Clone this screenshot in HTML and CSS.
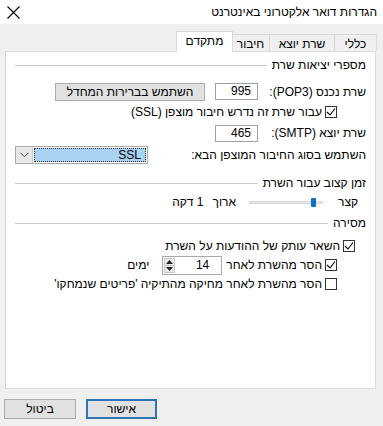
FILE: index.html
```html
<!DOCTYPE html>
<html lang="he" dir="rtl">
<head>
<meta charset="utf-8">
<title>הגדרות דואר אלקטרוני באינטרנט</title>
<link rel="stylesheet" href="styles.css">
</head>
<body>
<div class="window">
  <div class="titlebar">
    <span class="title">הגדרות דואר אלקטרוני באינטרנט</span>
    <svg class="close" width="13" height="13" viewBox="0 0 13 13"><path d="M0.5 0.5 L12.5 12.5 M12.5 0.5 L0.5 12.5" stroke="#000" stroke-width="1.1" fill="none"/></svg>
  </div>
  <div class="tabs">
    <div class="tab t1">כללי</div>
    <div class="tab t2">שרת יוצא</div>
    <div class="tab t3">חיבור</div>
    <div class="tab active">מתקדם</div>
  </div>
  <div class="panel">
    <div class="group-head g1"><span>מספרי יציאות שרת</span><i class="rule"></i></div>
    <div class="row r1">
      <span class="lbl fixed">שרת נכנס (POP3):</span>
      <span class="field">995</span>
      <span class="btn wide">השתמש בברירות המחדל</span>
    </div>
    <div class="row r2 indent">
      <span class="cb checked"><svg width="10" height="10" viewBox="0 0 10 10"><path d="M1 5 L4 8 L9 1.5" stroke="#000" stroke-width="1.1" fill="none"/></svg></span>
      <span class="lbl">עבור שרת זה נדרש חיבור מוצפן (SSL)</span>
    </div>
    <div class="row r3">
      <span class="lbl fixed">שרת יוצא (SMTP):</span>
      <span class="field">465</span>
    </div>
    <div class="row r4">
      <span class="lbl">השתמש בסוג החיבור המוצפן הבא:</span>
      <span class="select">
        <span class="sel-value"><span class="focus">SSL</span></span>
        <span class="sel-arrow"><svg width="9" height="6" viewBox="0 0 9 6"><path d="M0.5 0.8 L4.5 4.8 L8.5 0.8" stroke="#444" stroke-width="1" fill="none"/></svg></span>
      </span>
    </div>
    <div class="group-head g2"><span>זמן קצוב עבור השרת</span><i class="rule"></i></div>
    <div class="row r5">
      <span class="lbl">קצר</span>
      <span class="track"><i class="thumb"></i></span>
      <span class="lbl">ארוך</span>
      <span class="lbl val">1 דקה</span>
    </div>
    <div class="group-head g3"><span>מסירה</span><i class="rule"></i></div>
    <div class="row r6 indent-s">
      <span class="cb checked"><svg width="10" height="10" viewBox="0 0 10 10"><path d="M1 5 L4 8 L9 1.5" stroke="#000" stroke-width="1.1" fill="none"/></svg></span>
      <span class="lbl">השאר עותק של ההודעות על השרת</span>
    </div>
    <div class="row r7 indent">
      <span class="cb checked"><svg width="10" height="10" viewBox="0 0 10 10"><path d="M1 5 L4 8 L9 1.5" stroke="#000" stroke-width="1.1" fill="none"/></svg></span>
      <span class="lbl">הסר מהשרת לאחר</span>
      <span class="spin">
        <span class="spin-val">14</span>
        <span class="spin-btns">
          <span class="sb"><svg width="7" height="4" viewBox="0 0 7 4"><path d="M0 4 L3.5 0 L7 4 Z" fill="#222"/></svg></span>
          <span class="sb"><svg width="7" height="4" viewBox="0 0 7 4"><path d="M0 0 L3.5 4 L7 0 Z" fill="#222"/></svg></span>
        </span>
      </span>
      <span class="lbl days">ימים</span>
    </div>
    <div class="row r8 indent">
      <span class="cb"></span>
      <span class="lbl">הסר מהשרת לאחר מחיקה מהתיקיה 'פריטים שנמחקו'</span>
    </div>
  </div>
  <div class="footer">
    <span class="btn dlg default">אישור</span>
    <span class="btn dlg">ביטול</span>
  </div>
</div>
</body>
</html>
```
FILE: styles.css
```css
* { box-sizing: border-box; }
html, body { margin: 0; padding: 0; }
body {
  width: 383px;
  height: 426px;
  overflow: hidden;
  background: #f0f0f0;
  font-family: "Liberation Sans", "DejaVu Sans", sans-serif;
  font-size: 12px;
  color: #000;
}
.window { display: flex; flex-direction: column; height: 426px; }

.titlebar {
  height: 24px;
  background: #fff;
  display: flex;
  align-items: center;
  justify-content: space-between;
  padding: 0 6px 0 7px;
}
.title { font-size: 12px; }
.close { display: block; }

.tabs {
  height: 27px;
  display: flex;
  align-items: flex-end;
  padding-right: 6px;
}
.tab {
  height: 17px;
  border: 1px solid #d9d9d9;
  border-bottom: none;
  background: #f0f0f0;
  display: flex;
  align-items: center;
  justify-content: center;
  margin-left: -1px;
  padding-top: 1px;
}
.t1 { width: 43px; }
.t2 { width: 66px; }
.t3 { width: 39px; }
.tab.active {
  width: 57px;
  height: 21px;
  background: #fff;
  margin-left: 0;
  margin-right: -1px;
  margin-bottom: -1px;
  padding-bottom: 3px;
  z-index: 1;
}

.panel {
  margin: 0 7px 0 5px;
  height: 338px;
  background: #fff;
  border: 1px solid #d9d9d9;
  padding: 0 9px 0 9px;
  display: flex;
  flex-direction: column;
}

.group-head {
  height: 14px;
  display: flex;
  align-items: center;
  gap: 5px;
}
.rule { flex: 1; height: 1px; background: #c8c8c8; }
.g1 { margin-top: 6px; }
.g2 { margin-top: 12px; }
.g3 { margin-top: 6px; }

.row { display: flex; align-items: center; }
.r1 { height: 19px; margin-top: 10px; }
.r2 { height: 16px; margin-top: 3px; }
.r3 { height: 18px; margin-top: 4px; }
.r4 { height: 18px; margin-top: 4px; justify-content: space-between; }
.r5 { height: 16px; margin-top: 4px; padding-right: 8px; }
.r6 { height: 16px; margin-top: 8px; }
.r7 { height: 20px; margin-top: 1px; }
.r8 { height: 16px; margin-top: 1px; }
.indent { padding-right: 29px; }
.indent-s { padding-right: 11px; }

.lbl { white-space: nowrap; }
.fixed { width: 108px; }

.field {
  width: 43px;
  height: 17px;
  border: 1px solid #a0a0a0;
  background: #fff;
  text-align: right;
  padding-right: 6px;
  line-height: 15px;
}
.btn {
  display: flex;
  align-items: center;
  justify-content: center;
  background: #e1e1e1;
  border: 1px solid #adadad;
  white-space: nowrap;
}
.wide { width: 150px; height: 18px; margin-right: 10px; }

.cb {
  width: 12px;
  height: 12px;
  border: 1px solid #333;
  background: #fff;
  display: flex;
  align-items: center;
  justify-content: center;
  margin-left: 3px;
  flex: none;
}

.select {
  width: 133px;
  height: 18px;
  border: 1px solid #a9a9a9;
  display: flex;
  background: #fff;
}
.sel-value {
  flex: 1;
  padding: 1px;
  display: flex;
}
.focus {
  flex: 1;
  background: #a8d2f2;
  border: 1px dotted #333;
  text-align: right;
  padding-right: 4px;
  line-height: 12px;
}
.sel-arrow {
  width: 17px;
  background: #e8e8e8;
  border-right: 1px solid #c9c9c9;
  display: flex;
  align-items: center;
  justify-content: center;
}

.track {
  width: 74px;
  height: 3px;
  background: #e6e6e6;
  border: 1px solid #d8d8d8;
  margin-right: 15px;
  margin-left: 13px;
  position: relative;
}
.thumb {
  position: absolute;
  left: 61px;
  top: -4px;
  width: 5px;
  height: 9px;
  background: #0a73c9;
  border-radius: 1px;
}
.val { margin-right: 9px; }

.spin {
  width: 60px;
  height: 19px;
  border: 1px solid #a9a9a9;
  margin-right: 4px;
  display: flex;
  background: #fff;
}
.spin-val {
  flex: 1;
  text-align: right;
  padding-right: 12px;
  line-height: 17px;
}
.spin-btns {
  width: 11px;
  display: flex;
  flex-direction: column;
  margin: 1px;
}
.sb {
  flex: 1;
  background: #eaeaea;
  border: 1px solid #c6c6c6;
  display: flex;
  align-items: center;
  justify-content: center;
}
.sb + .sb { border-top: none; }
.days { margin-right: 13px; }

.footer {
  display: flex;
  justify-content: flex-end;
  gap: 10px;
  padding-left: 4px;
  margin-top: 10px;
}
.dlg { width: 72px; height: 20px; }
.default { border: 2px solid #2f74b5; width: 71px; }
```
